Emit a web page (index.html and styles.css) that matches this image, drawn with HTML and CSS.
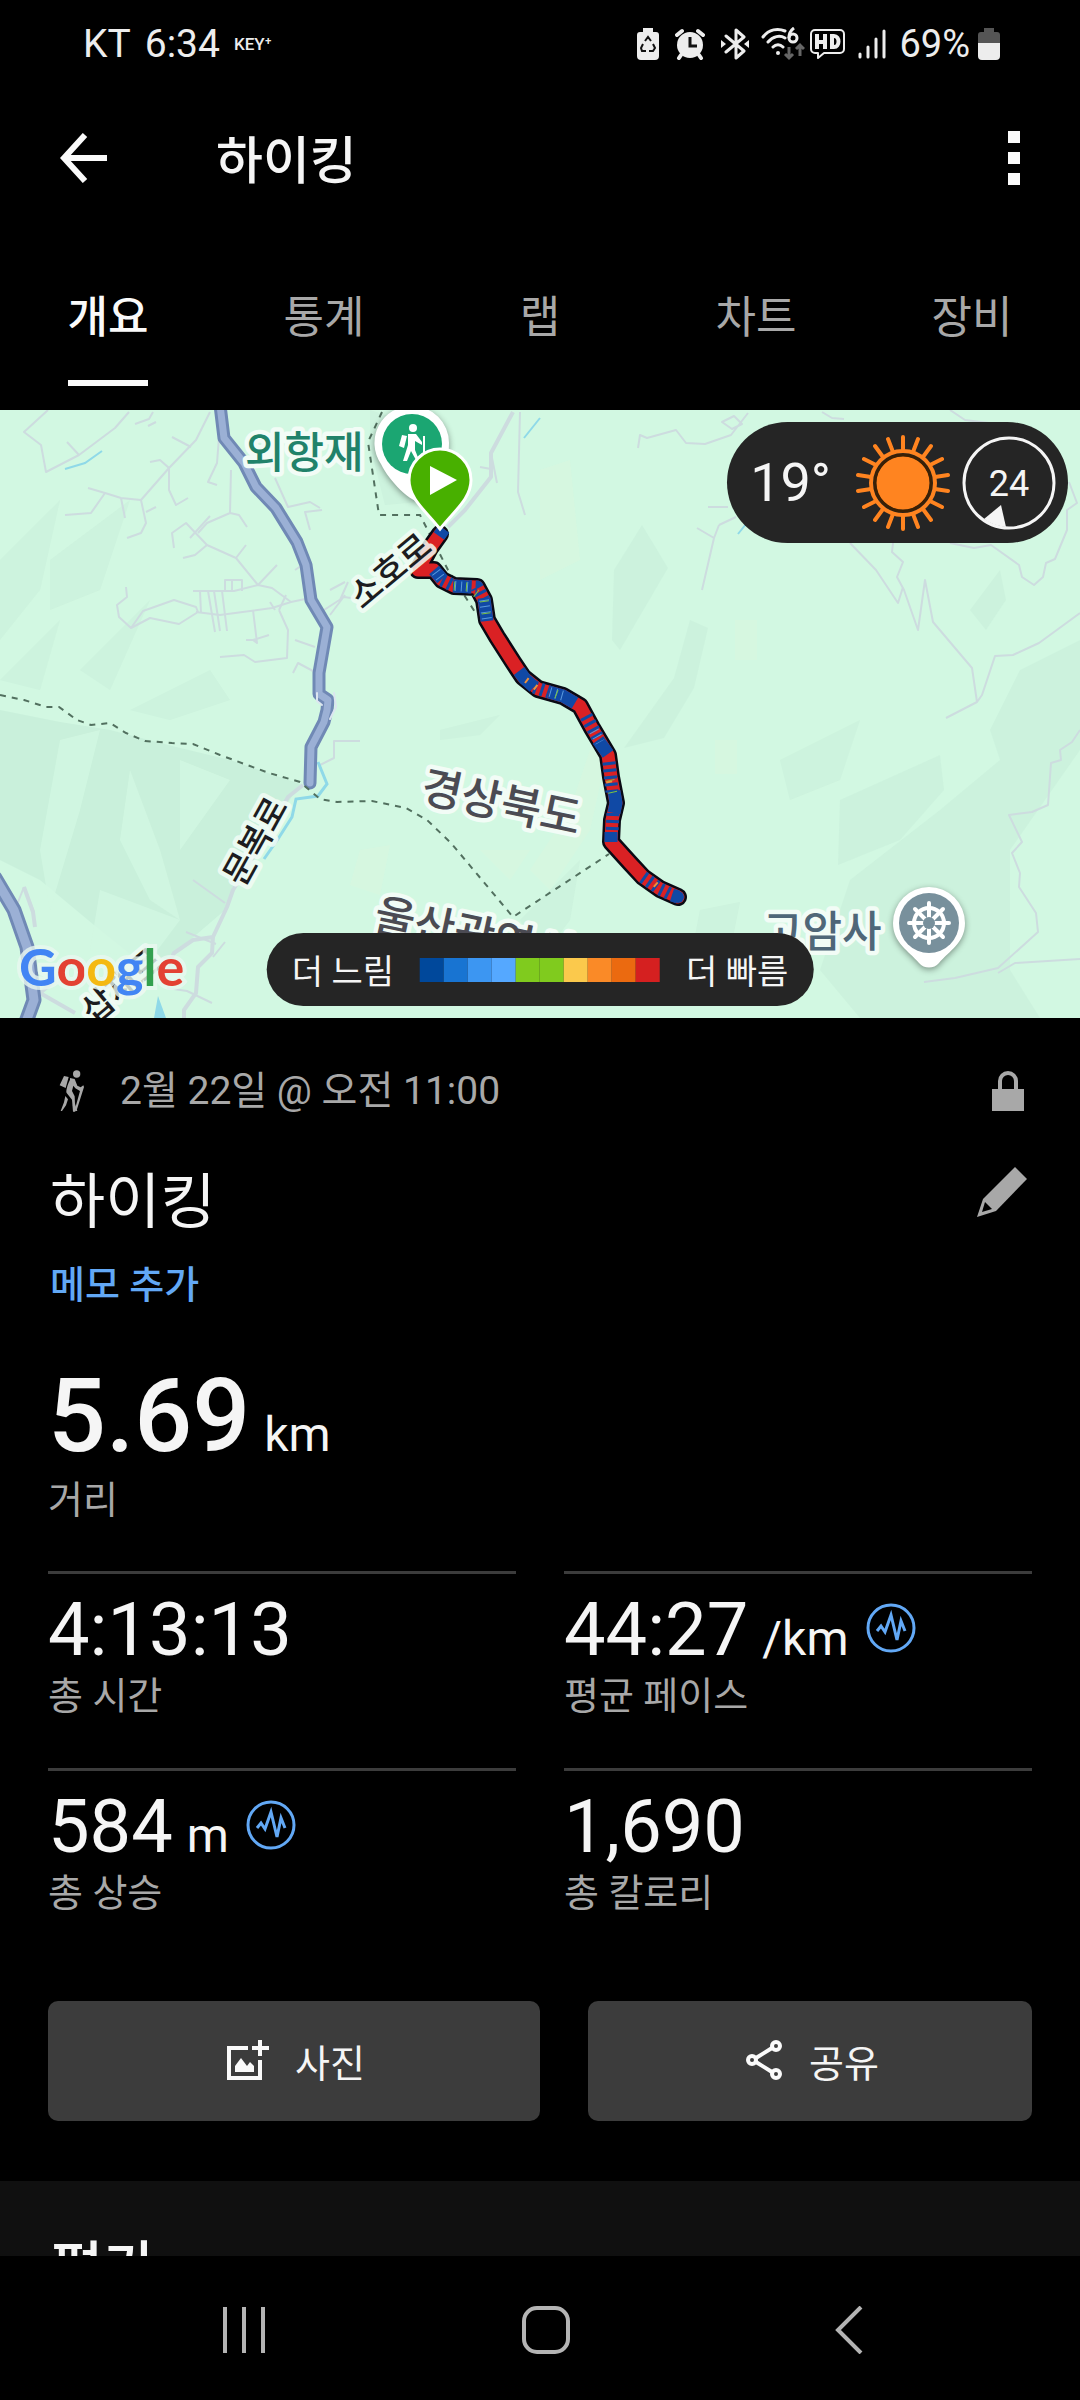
FILE: index.html
```html
<!DOCTYPE html>
<html lang="ko">

<head>
  <meta charset="UTF-8">
  <meta name="viewport" content="width=device-width, initial-scale=1.0">
  <title>하이킹</title>
  <link rel="stylesheet" href="styles.css">
</head>

<body>
  <div class="status-bar">
    <div class="status-left">
      <span>KT</span>
      <span>6:34</span>
      <span class="key">KEY⁺</span>
    </div>
    <div class="status-right">
      <svg width="22" height="32" viewBox="0 0 22 32">
        <path fill="#ededed" d="M6 0h10v4h3a3 3 0 0 1 3 3v21a4 4 0 0 1-4 4H4a4 4 0 0 1-4-4V7a3 3 0 0 1 3-3h3z"/>
        <path fill="none" stroke="#111" stroke-width="2" d="M8 13l3-4 3 4M16 16l2 4-2 3h-4M9 23H5l-1-3 2-4"/>
      </svg>
      <svg width="30" height="32" viewBox="0 0 30 32">
        <circle cx="15" cy="17" r="13" fill="#ededed"/>
        <path fill="none" stroke="#ededed" stroke-width="4" stroke-linecap="round" d="M2 7l5-4M28 7l-5-4M6 27l-2 3M24 27l2 3"/>
        <path fill="none" stroke="#111" stroke-width="3" d="M15 9v9h7"/>
      </svg>
      <svg width="28" height="32" viewBox="0 0 28 32">
        <path fill="none" stroke="#ededed" stroke-width="3" stroke-linejoin="round" stroke-linecap="round" d="M5 8l18 15-8 7V2l8 7L5 24"/>
        <path fill="#ededed" d="M0 12l5 4-5 4zM28 12l-5 4 5 4z"/>
      </svg>
      <svg class="wifi" width="44" height="34" viewBox="0 0 44 34">
        <path fill="none" stroke="#ededed" stroke-width="3" stroke-linecap="round" d="M2 10C8 2 17 1 24 4M7 15c5-6 12-7 17-4M12 20c3-3 7-3 10 0"/>
        <circle cx="17" cy="26" r="2" fill="#ededed"/>
        <circle cx="32" cy="11" r="4" fill="none" stroke="#ededed" stroke-width="3"/>
        <path fill="none" stroke="#ededed" stroke-width="3" d="M28 11c0-5 2-8 5-10"/>
        <path fill="none" stroke="#666" stroke-width="3" d="M28 20v11M24 27l4 4 4-4M39 29V18M35 22l4-4 4 4"/>
      </svg>
      <svg width="36" height="32" viewBox="0 0 36 32">
        <path fill="none" stroke="#ededed" stroke-width="2" stroke-linejoin="round" d="M5 2h25a4 4 0 0 1 4 4v15a4 4 0 0 1-4 4H14l-6 5v-5H5a4 4 0 0 1-4-4V6a4 4 0 0 1 4-4z"/>
        <path fill="none" stroke="#ededed" stroke-width="4" d="M7 6v15M15 6v15M7 14h8M22 6v15M22 8h2c6 0 6 11 0 11h-2"/>
      </svg>
      <svg width="28" height="30" viewBox="0 0 28 30">
        <path stroke="#ededed" stroke-width="3" stroke-linecap="round" d="M2 25v3M10 18v10M18 10v18M26 2v26"/>
      </svg>
      <span class="percent">69%</span>
      <svg width="22" height="32" viewBox="0 0 22 32">
        <path fill="#555" d="M6 0h10v4h3a3 3 0 0 1 3 3v9H0V7a3 3 0 0 1 3-3h3z"/>
        <path fill="#ededed" d="M0 15h22v13a4 4 0 0 1-4 4H4a4 4 0 0 1-4-4z"/>
      </svg>
    </div>
  </div>

  <header class="app-bar">
    <button class="icon-btn" aria-label="뒤로">
      <svg width="48" height="50" viewBox="0 0 48 50">
        <path fill="none" stroke="#fafafa" stroke-width="6" d="M25 2L4 25l21 23M4 25h43"/>
      </svg>
    </button>
    <h1 class="app-title">하이킹</h1>
    <button class="icon-btn" aria-label="더보기">
      <svg width="12" height="54" viewBox="0 0 12 54">
        <path fill="#fafafa" d="M0 0h12v12H0zM0 21h12v12H0zM0 42h12v12H0z"/>
      </svg>
    </button>
  </header>

  <nav class="tabs">
    <button class="tab active"><span>개요</span></button>
    <button class="tab"><span>통계</span></button>
    <button class="tab"><span>랩</span></button>
    <button class="tab"><span>차트</span></button>
    <button class="tab"><span>장비</span></button>
  </nav>

  <main class="content">
    <section class="map">
      <svg class="map-canvas" viewBox="0 0 1080 608" preserveAspectRatio="xMidYMid slice">
        <rect width="1080" height="608" fill="#d2f8e2"/>

        <!-- terrain shading -->
        <g fill="#c8eeda">
          <path opacity=".9" d="M0 300L60 312 110 320 172 336 230 350 300 374 270 420 235 470 225 500 190 530 150 560 100 520 40 470 0 450z"/>
          <path opacity=".5" d="M0 150L60 90 40 180 0 230zM50 150l80-60-30 90-50 20zM0 270l60-60-20 70zM80 260l70-70-40 90zM130 300l80-40 20 30-60 20z"/>
          <path opacity=".6" d="M642 115L668 158 620 240 612 230 614 160zM690 210l18 8-14 60-30 50-40 10 50-70zM1000 160l6 30-20 30-16-20zM840 390L940 345 944 380 900 430 838 455z"/>
          <path opacity=".6" d="M1080 230L1020 260 990 320 1000 350 940 400 850 470 820 560 860 608 1040 608 1010 560 1010 440 1080 340z"/>
          <path opacity=".5" d="M440 320l60-15-20 20-40 5zM520 510l60-60-10 60-30 40zM700 500l40-8-10 50-40 10zM780 350l80-40-20 60-50 20zM370 0l60 20 10 70-55 5-15-60z"/>
        </g>
        <g fill="#d2f8e2">
          <path opacity=".8" d="M60 330l40-10-20 80-30 100-10-60zM130 360l30 80 20 70-30-20-30-60zM100 480l80 30-30 40-60-10zM180 350l50 20-50 70z"/>
        </g>
        <g fill="#e0f7dc" opacity=".35">
          <path d="M540 60l30-10 10 100-40 20zM735 210h22v40h-22zM715 330h22v34h-22zM360 440l30-5-10 50-30-10zM590 340l20-10-20 90-40 60-20-20 40-60zM480 440l50 0-20 30z"/>
        </g>

        <!-- lanes -->
        <g fill="none" stroke="#cddcdf" stroke-width="2" stroke-linejoin="round">
          <path d="M48 0L24 22 41 35 46 62 79 45 115 18 129 2M67 32l12 13M210 2L196 30 169 58 141 90 121 88 105 83 91 103 65 105M88 78l17 5M121 88l4 20"/>
          <path d="M141 90l5 23-5 10-14 5M146 102l10-5M172 27l19 10M150 52l10-2 9 8v22l7 15 12-7M219 27l-2 26-9 19 9 3M231 60l-1 43-23 10-9 10M230 103l9 2 8 12"/>
          <path d="M135 14l14-5 4-7M148 16l8-4M174 138l-2-15 14-10 21 22 29 13 22 27 19-20M183 148l12-3 12-10M236 148l10-13M190 128l20-22"/>
          <path d="M193 181h41l24-6 14 3 19 14 19-4M131 218l12-17 31-11 22 7 2 5-19 12-29-6zM126 177l1 10-10 8 2 12 12 11M196 202l24 3 52-7 19-6"/>
          <path d="M200 181l1 22M208 181l7 41M214 181l6 40M222 181l5 40M225 181v-11h17v11M232 170v10M253 200l4 33-4-3 16-5M246 230h10M279 200l9 20-1 28-32 4-11-7-24 2M279 200l7-15M275 200l-5-8"/>
          <path d="M293 263l5-10 15 8M295 230l20 7M275 68l13 29 22-5 10 6M310 120l-5-18 17-2M310 150l-15 10M324 200l20-13 21 3M330 205l15-20M330 180l15-8M340 190l8-18"/>
          <path d="M520 2l-2 80 7 23M491 43l6 30M480 57l11 2"/>
          <path d="M638 38l2-13 7 3 29-8 10 13 19 1 26-9 17-22M722 12l12-6 8 8-10 5zM822 2l10 6 12 1M697 118l17 10-12 52M719 115l17-8M719 115l-5 13M708 97h20"/>
          <path d="M850 133l26 27 22 33 5-16M893 133l-1 9 11 10-6 15 7 13 14 40 7-50 8 42 39 46 5 34-31 16M977 292l5-7 13-39 18-1 26-12 41-30"/>
          <path d="M950 133l24 5 17-3 28 20 3 12 12 8 9-8 3-14 9-4 12-29V100l10-7-8-21M950 0l15 10 40 5M1080 320l-8 12-12 8 1 10-10 3-3 42-16 7-23 3 13 27-10 11 8 20-1 14 17 26 2 19-40 36-43 10-31 4M998 563l17-10 65-4"/>
          <path d="M193 470l32 23M186 522l30 12M225 532l-12 15M24 477l-8 20M24 477l10 25M167 578l20 3 25 12M320 355l14-7v-17h26"/>
        </g>
        <g fill="none" stroke="#cddcdf" stroke-width="4" stroke-linejoin="round">
          <path d="M513 2L491 43v24l-26 33-17 17M303 375l-15 12-18 33-37 60-6 17-14 30-1 16-14 14-2 26-12 17v8M213 527l-20 3-19 13-10 20M24 477l9 25 2 15M52 573l-12 10 35 20"/>
        </g>

        <!-- water -->
        <g fill="none" stroke="#8fd9e8" stroke-width="3">
          <path d="M318 352l9 22-9 12-22 3-4 18-14 22-14 20"/>
          <path stroke-width="2" d="M65 59l20-6 17-12M524 28l16-20M738 124l8-10"/>
        </g>
        <path fill="#8fd9e8" d="M158 586l8 22h-12z"/>

        <!-- main roads -->
        <g fill="none" stroke-linejoin="round" stroke-linecap="round">
          <path stroke="#7089b5" stroke-width="13" d="M220-5L224 28 244 53 256 77 276 98 297 132 306 155 311 190 327 217 319 263V284L328 290 327 300 324 312 311 337 310 373"/>
          <path stroke="#9bb0d5" stroke-width="7" d="M220-5L224 28 244 53 256 77 276 98 297 132 306 155 311 190 327 217 319 263V284L328 290 327 300 324 312 311 337 310 373"/>
          <path stroke="#7089b5" stroke-width="15" d="M-5 468L14 500 27 537 34 590 26 612"/>
          <path stroke="#9bb0d5" stroke-width="9" d="M-5 468L14 500 27 537 34 590 26 612"/>
          <path stroke="#dce5f0" stroke-width="2" d="M317 283v8l5 4M334 283l2 14-6 12"/>
        </g>

        <!-- borders -->
        <g fill="none" stroke="#52705f" stroke-width="2" stroke-dasharray="6 6">
          <path d="M0 285l24 5 22 7h13l18 13 14 5 19-2 16 10 19 8 27 2 21 1 27 11 49 18 31 9 20 17 17 3 35-1 34 7 21 12 24 23 62 74 96-63"/>
          <path d="M382 2l-14 30 11 73h41l28 55 27 42"/>
        </g>

        <!-- track -->
        <g fill="none" stroke-linejoin="round">
          <path stroke="#0a0a14" stroke-width="18" stroke-linecap="round" d="M440 124L430 138 418 160 434 160 442 170 454 176 477 177 484 190 487 210 497 227 513 252 523 267 538 279 563 286 580 296 592 318 608 345 611 367 616 393 612 410 611 432 630 453 643 467 660 479 678 487"/>
          <path stroke="#da2124" stroke-width="13" stroke-linecap="round" d="M440 124L430 138 418 160 434 160 442 170 454 176 477 177 484 190 487 210 497 227 513 252 523 267 538 279 563 286 580 296 592 318 608 345 611 367 616 393 612 410 611 432 630 453 643 467 660 479 678 487"/>
          <path stroke="#1049a5" stroke-width="13" d="M444 119l-5 7M434 160l8 9M453 176l18 1M484 188l3 23M519 261l6 8 9 8M549 282l14 4 12 7M598 330l10 14M614 381l2 12-2 10M611 422v10M672 485l6 2"/>
          <path stroke="#1049a5" stroke-width="13" stroke-dasharray="3 4" d="M442 170l12 6 23 1 7 13M534 277l15 5M586 306l13 24M609 352l3 30M613 403l-1 20M643 467l17 12 12 6"/>
          <path stroke="#5a9ade" stroke-width="10" stroke-dasharray="1 5" d="M436 162l6 8M455 176l14 1M484 190l3 20M550 282l14 4M594 321l6 11"/>
          <path stroke="#7bc043" stroke-width="9" stroke-dasharray="1 11" d="M454 176l14 1 16 12 3 20M556 284l8 3M610 370l3 14"/>
          <path stroke="#f0913a" stroke-width="6" stroke-dasharray="2 9" d="M526 270l12 9M609 371l2 10M655 474l8 7"/>
          <circle cx="678" cy="487" r="6" fill="#1049a5"/>
        </g>

        <!-- labels -->
        <g class="map-label">
          <text class="place trail" x="245" y="58">외항재</text>
          <text class="street" text-anchor="middle" transform="translate(398 170) rotate(-40)">소호로</text>
          <text class="street" text-anchor="middle" transform="translate(266 437) rotate(-61)">문복로</text>
          <text class="region" transform="translate(419 391) rotate(12)">경상북도</text>
          <text class="region" transform="translate(372 519) rotate(12)">울산광역시</text>
          <text class="place temple" x="763" y="537">고암사</text>
          <text class="street" transform="translate(94 615) rotate(-40)">삽재로</text>
        </g>

        <!-- trailhead pin -->
        <path class="pin-shadow" fill="#fff" d="M412-4a37 37 0 0 1 37 37c0 30-18 54-26 60-12 0-34-22-42-39a37 37 0 0 1 31-58z"/>
        <circle cx="412" cy="34" r="30" fill="#1ba672"/>
        <circle cx="413" cy="18" r="4" fill="#fff"/>
        <path fill="#fff" d="M402 25l5 1-3 12-5-2zM408 24h8l6 8v3l-7-4v9l4 10h-3l-5-9-4 10h-4l5-16z"/>
        <path fill="none" stroke="#fff" stroke-width="2" d="M424 26v25"/>

        <!-- start pin -->
        <path fill="#48b000" stroke="#fff" stroke-width="3" d="M440 39a31 31 0 0 1 31 31c0 19-17 31-31 49-14-18-31-30-31-49a31 31 0 0 1 31-31z"/>
        <path fill="#fff" d="M430 56l27 14-27 15z"/>

        <!-- temple pin -->
        <path class="pin-shadow" fill="#fff" d="M929 477a36 36 0 0 1 36 36c0 20-16 28-26 40-5 6-15 6-20 0-10-12-26-20-26-40a36 36 0 0 1 36-36z"/>
        <circle cx="929" cy="513" r="30" fill="#78909c"/>
        <g fill="none" stroke="#fff" stroke-width="4" stroke-linecap="round">
          <circle cx="929" cy="513" r="15"/>
          <path d="M929 493v40M909 513h40M915 499l28 28M943 499l-28 28"/>
        </g>
        <circle cx="929" cy="513" r="6" fill="#78909c"/>
      </svg>

      <div class="google">
        <span class="blue">G</span><span class="red">o</span><span class="yellow">o</span><span class="blue">g</span><span class="green">l</span><span class="red">e</span>
      </div>

      <div class="weather">
        <span class="temp">19°</span>
        <svg width="94" height="96" viewBox="-47 -48 94 96">
          <circle r="27" fill="#ff8420"/>
          <circle r="28" fill="none" stroke="#3a2005" stroke-width="3"/>
          <circle r="32" fill="none" stroke="#ff8420" stroke-width="4"/>
          <path stroke="#ff8420" stroke-width="4" stroke-linecap="round" d="M0-33V-46M0 33V46M10-31L15-44M20-26L28-37M27-18L39-24M32-6L45-8M32 6L45 8M27 18L39 24M20 26L28 37M10 31L15 44M-10-31L-15-44M-20-26L-28-37M-27-18L-39-24M-32-6L-45-8M-32 6L-45 8M-27 18L-39 24M-20 26L-28 37M-10 31L-15 44"/>
        </svg>
        <div class="wind">
          <svg width="94" height="94" viewBox="0 0 94 94">
            <circle cx="47" cy="47" r="45" fill="none" stroke="#f5f5f5" stroke-width="3"/>
            <path fill="#f5f5f5" d="M39 69l5 22c-8-1-15-3-22-8z"/>
          </svg>
          <span>24</span>
        </div>
      </div>

      <div class="legend">
        <span>더 느림</span>
        <div class="legend-scale">
          <i class="c1"></i><i class="c2"></i><i class="c3"></i><i class="c4"></i><i class="c5"></i><i class="c5"></i><i class="c6"></i><i class="c7"></i><i class="c8"></i><i class="c9"></i>
        </div>
        <span>더 빠름</span>
      </div>
    </section>

    <section class="overview">
      <div class="info-row">
        <svg width="28" height="42" viewBox="54 42 84 126" fill="#a8a8a8">
          <circle cx="110" cy="54" r="11"/>
          <path d="M72 60l14 3-9 33-18-8zM90 66l14 3 8 20 10 5 8-6 2 5-22 70h-6l16-58-14-8-6-8-4 16 8 16 2 46h-7l-3-36-16-20c-3-6 2-24 10-40zM76 120l8 10-6 18-12 17h-4l10-26z"/>
          <path d="M104 140l8 25h-6l-8-18z"/>
        </svg>
        <span class="date">2월 22일 @ 오전 11:00</span>
        <svg width="32" height="42" viewBox="0 0 32 42">
          <path fill="none" stroke="#a8a8a8" stroke-width="4" d="M8 20V11a8 8 0 0 1 16 0v9"/>
          <path fill="#a8a8a8" d="M0 19h32v22H0z"/>
        </svg>
      </div>

      <div class="title-row">
        <h2 class="title">하이킹</h2>
        <button class="icon-btn" aria-label="이름 수정">
          <svg width="50" height="50" viewBox="0 0 50 50">
            <path fill="#a8a8a8" d="M38 0l12 12-31 32L0 50l6-18z"/>
            <path fill="#000" d="M8 35l7 7-10 3z"/>
          </svg>
        </button>
      </div>
      <a class="memo" href="#">메모 추가</a>

      <div class="stat main-stat">
        <p class="value">5.69<span class="unit">km</span></p>
        <p class="label">거리</p>
      </div>

      <div class="stats">
        <div class="stat">
          <p class="value">4:13:13</p>
          <p class="label">총 시간</p>
        </div>
        <div class="stat">
          <p class="value">44:27<span class="unit">/km</span><svg class="pulse" width="50" height="50" viewBox="0 0 50 50">
              <circle cx="25" cy="25" r="23"/>
              <path d="M11 28l4-5 4 6 6-17 6 25 4-19 4 10"/>
            </svg></p>
          <p class="label">평균 페이스</p>
        </div>
        <div class="stat">
          <p class="value">584<span class="unit">m</span><svg class="pulse" width="50" height="50" viewBox="0 0 50 50">
              <circle cx="25" cy="25" r="23"/>
              <path d="M11 28l4-5 4 6 6-17 6 25 4-19 4 10"/>
            </svg></p>
          <p class="label">총 상승</p>
        </div>
        <div class="stat">
          <p class="value">1,690</p>
          <p class="label">총 칼로리</p>
        </div>
      </div>

      <div class="actions">
        <button class="action photo">
          <svg width="42" height="40" viewBox="0 0 42 40">
            <path fill="none" stroke="#fafafa" stroke-width="4" d="M21 8H2v30h31V20"/>
            <path fill="none" stroke="#fafafa" stroke-width="4" d="M33 0v16M25 8h17"/>
            <path fill="#fafafa" d="M8 32V26l6-8 6 8 3-4 4 4v6z"/>
          </svg>
          사진
        </button>
        <button class="action share">
          <svg width="38" height="40" viewBox="0 0 38 40">
            <g fill="none" stroke="#fafafa" stroke-width="4">
              <circle cx="7" cy="20" r="4"/>
              <circle cx="31" cy="6" r="4"/>
              <circle cx="31" cy="34" r="4"/>
              <path d="M11 18l16-10M11 22l16 10"/>
            </g>
          </svg>
          공유
        </button>
      </div>
    </section>

    <section class="rating">
      <h2>평가</h2>
    </section>
  </main>

  <nav class="system-nav">
    <button class="icon-btn" aria-label="최근 앱">
      <svg width="44" height="46" viewBox="0 0 44 46">
        <path stroke="#b4b4b4" stroke-width="4" d="M3 0v46M22 0v46M41 0v46"/>
      </svg>
    </button>
    <button class="icon-btn" aria-label="홈">
      <svg width="48" height="48" viewBox="0 0 48 48">
        <rect x="2" y="2" width="44" height="44" rx="13" fill="none" stroke="#b4b4b4" stroke-width="4"/>
      </svg>
    </button>
    <button class="icon-btn" aria-label="뒤로 가기">
      <svg width="28" height="48" viewBox="0 0 28 48">
        <path fill="none" stroke="#b4b4b4" stroke-width="4" d="M26 1L3 24l23 23"/>
      </svg>
    </button>
  </nav>
</body>

</html>
```
FILE: styles.css
```css
* {
  box-sizing: border-box;
}
html,
body {
  height: 100%;
}
body {
  margin: 0;
  display: flex;
  flex-direction: column;
  background: #000;
  color: #f5f5f5;
  font-family: Roboto, "Noto Sans CJK KR", sans-serif;
}
h1, h2, p {
  margin: 0;
}
button {
  padding: 0;
  border: 0;
  background: none;
  color: inherit;
  font-family: inherit;
  cursor: pointer;
}
svg {
  display: block;
  flex-shrink: 0;
}
.icon-btn {
  display: block;
}

/* status bar */
.status-bar {
  flex-shrink: 0;
  height: 88px;
  padding: 0 80px 0 83px;
  display: flex;
  align-items: center;
  justify-content: space-between;
  color: #ededed;
}
.status-left,
.status-right {
  display: flex;
  align-items: center;
}
.status-left {
  gap: 14px;
  font-size: 39px;
}
.key {
  font-size: 17px;
  font-weight: 500;
}
.status-right {
  gap: 12px;
}
.status-right svg:nth-child(-n+2) {
  margin-right: 4px;
}
.status-right .wifi {
  margin-right: -7px;
}
.percent {
  margin: 0 -4px 0 1px;
  font-size: 38px;
}

/* app bar */
.app-bar {
  flex-shrink: 0;
  height: 140px;
  padding: 0 60px;
  display: flex;
  align-items: center;
}
.app-title {
  flex: 1;
  margin-left: 108px;
  padding-top: 8px;
  font-size: 51px;
  font-weight: 500;
  line-height: 60px;
}

/* tabs */
.tabs {
  flex-shrink: 0;
  display: flex;
  padding: 58px 0 24px;
}
.tab {
  flex: 1;
  font-size: 44px;
  line-height: 64px;
  color: #a8a8a8;
}
.tab span {
  display: inline-block;
  padding-bottom: 30px;
  border-bottom: 6px solid transparent;
}
.tab.active {
  color: #fafafa;
  font-weight: 500;
}
.tab.active span {
  border-color: #fafafa;
}

.content {
  flex: 1;
  min-height: 0;
  overflow: hidden;
}

/* map */
.map {
  position: relative;
  height: 608px;
  overflow: hidden;
}
.map-canvas {
  width: 100%;
  height: 100%;
}
.map-label text {
  paint-order: stroke;
  stroke: #f2fcf6;
  stroke-width: 9px;
  stroke-linejoin: round;
}
.map-label .place {
  font-size: 43px;
}
.map-label .trail {
  fill: #21826a;
  font-weight: 500;
}
.map-label .temple {
  fill: #4f6778;
  font-weight: 500;
}
.map-label .street {
  font-size: 34px;
  font-weight: 500;
  fill: #1c1c20;
  stroke-opacity: 0.85;
}
.map-label .region {
  font-size: 44px;
  font-weight: 500;
  fill: #4b4b53;
}
.pin-shadow {
  filter: drop-shadow(0 2px 3px rgba(0, 0, 0, 0.4));
}
.google {
  position: absolute;
  left: 19px;
  bottom: 22px;
  font: 700 52px/60px Lato, sans-serif;
}
.google span {
  paint-order: stroke;
  -webkit-text-stroke: 8px rgba(232, 248, 240, 0.8);
}
.google .blue {
  color: #4285f4;
}
.google .red {
  color: #e34133;
}
.google .yellow {
  color: #f4b912;
}
.google .green {
  color: #34a04f;
}
.weather {
  position: absolute;
  top: 12px;
  right: 12px;
  height: 121px;
  padding: 0 12px 0 23px;
  display: flex;
  align-items: center;
  border-radius: 61px;
  background: #252525;
}
.temp {
  margin-right: 25px;
  font-size: 54px;
}
.wind {
  position: relative;
  margin-left: 12px;
}
.wind span {
  position: absolute;
  inset: 0;
  text-align: center;
  font-size: 36px;
  line-height: 96px;
}
.legend {
  position: absolute;
  left: 50%;
  bottom: 12px;
  transform: translateX(-50%);
  height: 73px;
  padding: 0 25px;
  display: flex;
  align-items: center;
  gap: 26px;
  border-radius: 37px;
  background: #252525;
  font-size: 34px;
  white-space: nowrap;
}
.legend-scale {
  display: flex;
}
.legend-scale i {
  width: 24px;
  height: 24px;
}
.c1 { background: #00489b; }
.c2 { background: #1874d2; }
.c3 { background: #3c96f2; }
.c4 { background: #55a8ff; }
.c5 { background: #80cb1e; }
.c6 { background: #fbc94c; }
.c7 { background: #fa8a27; }
.c8 { background: #eb6a10; }
.c9 { background: #d52020; }

/* overview */
.overview {
  padding: 49px 48px 60px;
}
.info-row {
  display: flex;
  align-items: center;
  height: 48px;
  padding: 0 8px 0 10px;
  color: #a8a8a8;
}
.date {
  flex: 1;
  margin-left: 34px;
  font-size: 39px;
  line-height: 48px;
}
.title-row {
  margin-top: 52px;
  padding: 0 5px 0 2px;
  display: flex;
  align-items: flex-start;
  justify-content: space-between;
}
.title {
  font-size: 60px;
  font-weight: 400;
  line-height: 72px;
}
.memo {
  display: block;
  width: max-content;
  margin-top: 22px;
  padding-left: 2px;
  color: #62a8f5;
  font-size: 38px;
  font-weight: 500;
  line-height: 48px;
  text-decoration: none;
}
.value {
  font-size: 74px;
  line-height: 84px;
}
.unit {
  margin-left: 14px;
  font-size: 48px;
  line-height: 1;
}
.label {
  color: #a8a8a8;
  font-size: 38px;
  line-height: 48px;
}
.main-stat {
  margin: 47px 0;
}
.main-stat .value {
  font-size: 102px;
  font-weight: 500;
  line-height: 120px;
}
.main-stat .unit {
  font-weight: 400;
}
.stats {
  display: grid;
  grid-template-columns: 1fr 1fr;
  column-gap: 48px;
}
.stats .stat {
  padding: 14px 0 48px;
  border-top: 3px solid #3c3c3c;
}
.pulse {
  display: inline-block;
  margin-left: 17px;
  vertical-align: 2px;
  fill: none;
  stroke: #62a8f5;
  stroke-width: 3px;
}
.actions {
  display: flex;
  gap: 48px;
  margin-top: 36px;
}
.action {
  height: 120px;
  padding: 0 0 2px 4px;
  display: flex;
  align-items: center;
  justify-content: center;
  gap: 26px;
  border-radius: 10px;
  background: #3c3c3c;
  font-size: 38px;
}
.photo {
  flex: 41;
}
.share {
  flex: 37;
}

.rating {
  padding: 50px;
  background: #101010;
}
.rating h2 {
  font-size: 58px;
  font-weight: 500;
  line-height: 76px;
}

/* system nav */
.system-nav {
  flex-shrink: 0;
  height: 144px;
  padding: 4px 80px 0 93px;
  display: flex;
  align-items: center;
}
.system-nav .icon-btn {
  flex: 1;
}
.system-nav svg {
  margin: 0 auto;
}
```
